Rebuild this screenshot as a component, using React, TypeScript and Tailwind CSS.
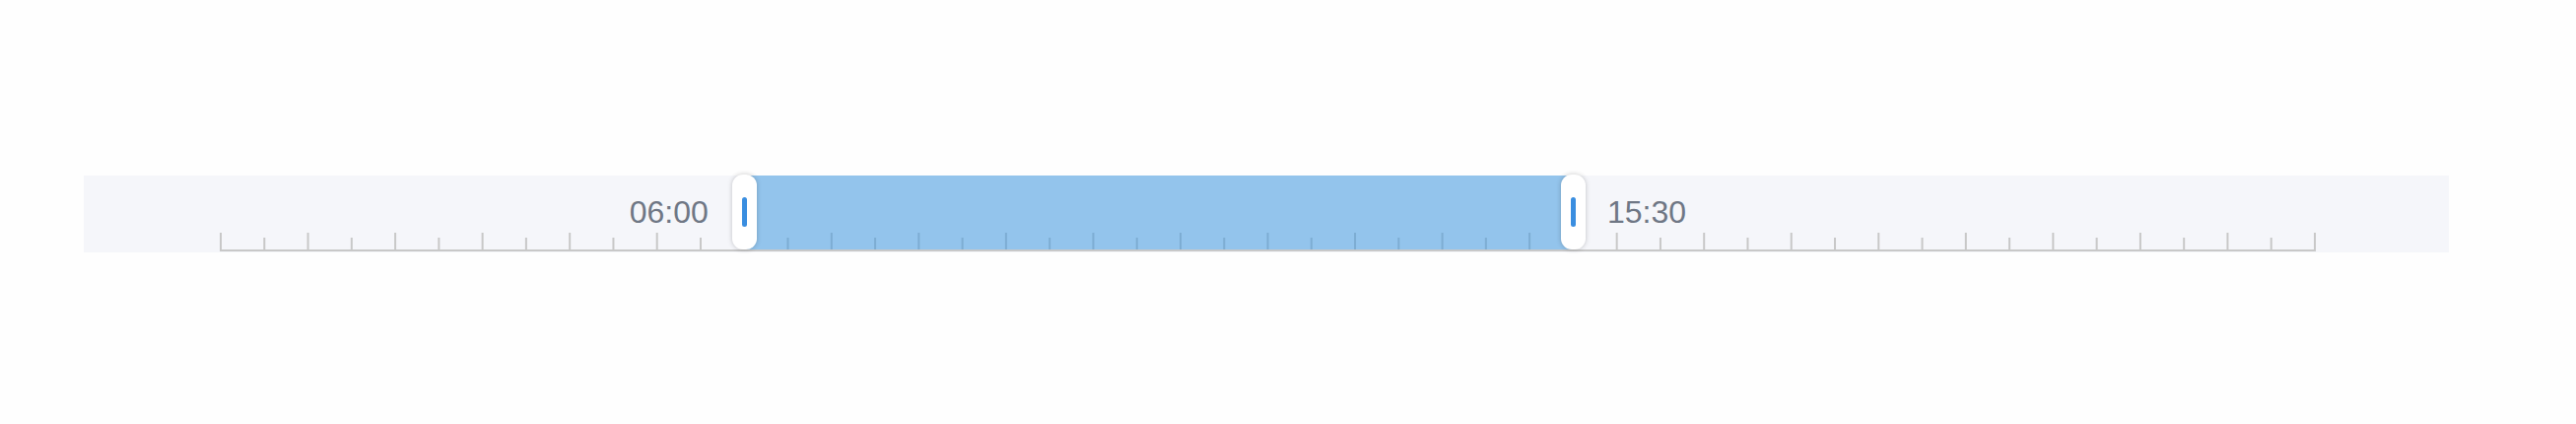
const HOURS = 24;
const RULER_W = 2125;
const STEP = RULER_W / (HOURS * 2);

// ruler starts 138px into the track
const hourToX = (h: number) => 139 + h * STEP * 2;

const start = 6;
const end = 15.5;

const Ruler = () => {
  const ticks = Array.from({ length: HOURS * 2 + 1 }, (_, i) => i);
  return (
    <svg width={RULER_W + 2} height={19} className="block">
      {ticks.map((i) => {
        const major = i % 2 === 0;
        return (
          <rect
            key={i}
            x={i * STEP}
            y={major ? 0 : 5}
            width={2}
            height={major ? 17 : 12}
            fill="#c8c8c8"
          />
        );
      })}
      <rect x={0} y={17} width={RULER_W + 2} height={2} fill="#c8c8c8" />
    </svg>
  );
};

const Thumb = () => (
  <div className="relative z-10 -mt-px flex h-[76px] w-[25px] shrink-0 items-center justify-center rounded-[11px] bg-white shadow-[0_0_5px_rgba(0,0,0,0.22)]">
    <div className="h-[30px] w-[5px] rounded-full bg-[#3a8ee0]" />
  </div>
);

export default function App() {
  const x1 = hourToX(start);
  const x2 = hourToX(end);

  return (
    <div className="min-h-[430px] bg-[#fefefe] pt-[178px] pl-[85px] font-['Liberation_Sans',Arial,sans-serif]">
      <div className="relative h-[78px] w-[2400px] bg-[#f5f6fa]">
        <div className="flex h-full items-end pb-px pl-[138px]">
          <Ruler />
        </div>

        {/* range selector on top of the ruler */}
        <div className="absolute inset-0 flex items-start text-[32px] leading-none text-[#6f7785]">
          <div className="flex shrink-0 justify-end pt-[21px] pr-[24px]" style={{ width: x1 - 12.5 }}>
            06:00
          </div>
          <Thumb />
          <div
            className="-mx-[12.5px] h-[75px] shrink-0 bg-[rgba(53,148,222,0.51)]"
            style={{ width: x2 - x1 }}
          />
          <Thumb />
          <div className="pt-[21px] pl-[22px]">15:30</div>
        </div>
      </div>
    </div>
  );
}
